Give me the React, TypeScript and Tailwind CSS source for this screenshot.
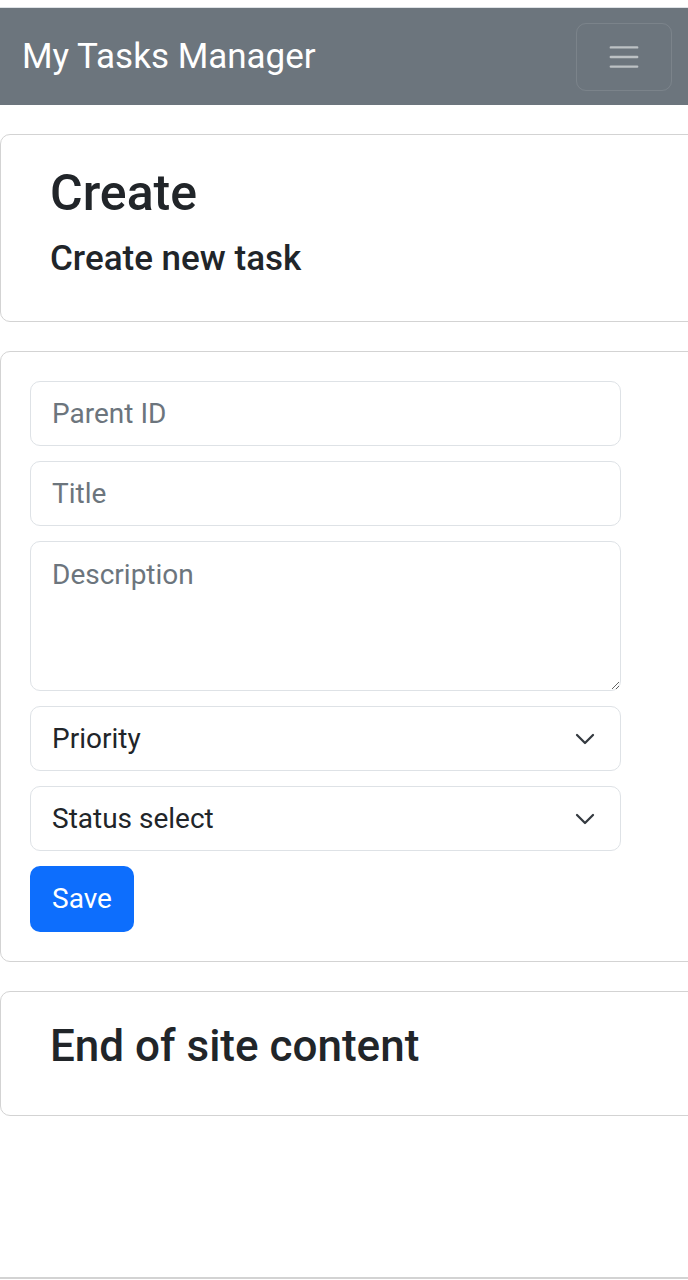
import React from 'react';

const font = { fontFamily: 'Roboto, "Noto Sans", sans-serif' };

const Chevron = () => (
  <svg
    className="pointer-events-none absolute right-[25px] top-1/2 -translate-y-1/2"
    width="22"
    height="16"
    viewBox="0 0 16 12"
    fill="none"
  >
    <path d="m2 3 6 6 6-6" stroke="#343a40" strokeWidth="1.7" strokeLinecap="round" strokeLinejoin="round" />
  </svg>
);

const inputCls =
  'block w-full h-[65px] rounded-[10px] border border-[#dee2e6] bg-white px-[21px] text-[28px] text-[#212529] placeholder:text-[#6c757d] outline-none';

const App = () => {
  return (
    <div className="min-h-[1280px] w-[688px] overflow-hidden bg-white text-[#212529]" style={font}>
      <div className="h-[8px] border-b border-[#dee2e6]" />

      {/* Navbar */}
      <nav className="flex h-[97px] items-center justify-between bg-[#6c757d] pl-[22px] pr-[16px]">
        <span className="text-[35px] leading-none text-white">My Tasks Manager</span>
        <button className="flex h-[68px] w-[96px] items-center justify-center rounded-[10px] border border-white/10">
          <svg width="44" height="36" viewBox="0 0 30 30">
            <path d="M4 7h22M4 15h22M4 23h22" stroke="rgba(255,255,255,0.55)" strokeWidth="2" strokeLinecap="round" />
          </svg>
        </button>
      </nav>

      <div className="flex w-[700px] flex-col gap-[29px] pt-[29px]">
        {/* Header card */}
        <div className="rounded-[10px] border border-[#d3d3d3] px-[49px] pb-[27px] pt-[28px]">
          <h1 className="mb-[15px] text-[50px] font-medium leading-[1.2]">Create</h1>
          <h4 className="mb-[14px] text-[35px] font-medium leading-[1.2]">Create new task</h4>
        </div>

        {/* Form card */}
        <div className="rounded-[10px] border border-[#d3d3d3] p-[29px]">
          <form className="flex w-[591px] flex-col gap-[15px]" onSubmit={(e) => e.preventDefault()}>
            <input className={inputCls} placeholder="Parent ID" />
            <input className={inputCls} placeholder="Title" />
            <textarea
              className="block h-[150px] w-full resize-y rounded-[10px] border border-[#dee2e6] bg-white px-[21px] py-[12px] text-[28px] leading-[1.5] text-[#212529] placeholder:text-[#6c757d] outline-none"
              placeholder="Description"
            />
            <div className="relative">
              <select className={inputCls + ' appearance-none'} defaultValue="">
                <option value="">Priority</option>
                <option value="1">Low</option>
                <option value="2">Medium</option>
                <option value="3">High</option>
              </select>
              <Chevron />
            </div>
            <div className="relative">
              <select className={inputCls + ' appearance-none'} defaultValue="">
                <option value="">Status select</option>
                <option value="1">Open</option>
                <option value="2">Done</option>
              </select>
              <Chevron />
            </div>
            <div>
              <button
                type="submit"
                className="h-[66px] w-[104px] rounded-[10px] bg-[#0d6efd] text-[28px] text-white"
              >
                Save
              </button>
            </div>
          </form>
        </div>

        {/* Footer card */}
        <div className="rounded-[10px] border border-[#d3d3d3] px-[49px] pb-[28px] pt-[28px]">
          <h2 className="mb-[14px] text-[44px] font-medium leading-[1.2]">End of site content</h2>
        </div>
      </div>

      <div className="h-[161px]" />
      <div className="border-b-2 border-[#d3d3d3]" />
    </div>
  );
};

export default App;
